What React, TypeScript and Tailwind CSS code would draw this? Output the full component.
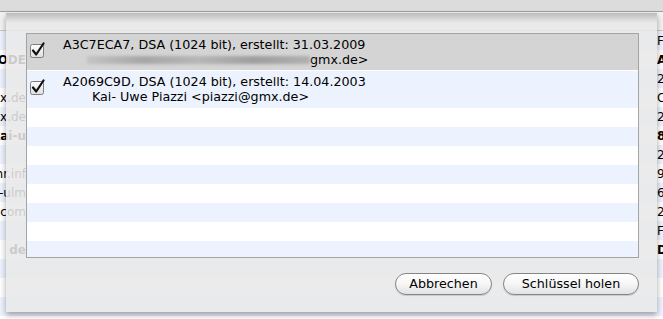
import React from 'react';

const font = { fontFamily: '"DejaVu Sans", "Liberation Sans", sans-serif' };

// rows of the parent window that peek out round the sheet
const bgRows: { left: string; right: string; bold?: boolean }[] = [
  { left: '', right: 'F' },
  { left: 'CODE', right: 'A', bold: true },
  { left: '', right: '2' },
  { left: 'gmx.de', right: 'C' },
  { left: 'gmx.de', right: '2' },
  { left: 'kai-u', right: '8', bold: true },
  { left: '', right: '2' },
  { left: 'hr.inf', right: '9' },
  { left: 'uni-ulm', right: '6' },
  { left: 'x.com', right: '2' },
  { left: '', right: 'F' },
  { left: 'de', right: 'D', bold: true },
  { left: '', right: '' },
  { left: '', right: '' },
  { left: '', right: '' },
];

const Checkbox: React.FC = () => (
  <svg width="17" height="17" viewBox="0 0 17 17">
    <defs>
      <linearGradient id="cb" x1="0" y1="0" x2="0" y2="1">
        <stop offset="0" stopColor="#ffffff" />
        <stop offset="1" stopColor="#dedede" />
      </linearGradient>
    </defs>
    <rect x="0.5" y="2.5" width="13" height="13" rx="2" fill="url(#cb)" stroke="#7c7c7c" />
    <path d="M3 8.5 L6.2 12.5 L13.5 1.5" fill="none" stroke="#111" strokeWidth="2.2" strokeLinecap="round" strokeLinejoin="round" />
  </svg>
);

const Row: React.FC<{ bg: string; children: React.ReactNode }> = ({ bg, children }) => (
  <div className={`flex h-[37px] shrink-0 ${bg}`}>
    <div className="w-[36px] shrink-0 pl-[3px] pt-[8px]">
      <Checkbox />
    </div>
    <div className="pt-[3px] text-[12.7px] leading-[15px] text-black whitespace-nowrap">{children}</div>
  </div>
);

export default function App() {
  return (
    <div className="relative w-[663px] h-[319px] overflow-hidden bg-white" style={font}>
      {/* parent window */}
      <div className="h-[12px] bg-[#dcdcdc] border-b border-[#a0a0a0]" />
      <div className="h-[19px] bg-[#f2f2f2] border-b border-[#c8c8c8]" />
      <div className="flex flex-col">
        {bgRows.map((r, i) => (
          <div
            key={i}
            className={`flex h-[19px] items-center justify-between text-[12px] text-black ${i % 2 === 0 ? 'bg-[#edf3fe]' : 'bg-white'}`}
          >
            <div className={`flex w-[26px] justify-end overflow-hidden whitespace-nowrap ${r.bold ? 'font-bold' : ''}`}>{r.left}</div>
            <div className={`w-[6px] overflow-hidden whitespace-nowrap ${r.bold ? 'font-bold' : ''}`}>{r.right}</div>
          </div>
        ))}
      </div>

      {/* sheet */}
      <div className="absolute left-[6px] top-[13px] w-[651px] h-[299px] bg-[#e8e8e8]/[0.87] shadow-[0_3px_6px_rgba(0,0,0,0.35)] flex flex-col">
        <div className="absolute inset-x-0 top-0 h-[10px] bg-gradient-to-b from-black/20 to-transparent pointer-events-none" />
        <div className="pt-[20px] pl-[20px] pr-[18px]">
          <div className="h-[225px] bg-white border border-[#a4a4a4] overflow-hidden flex flex-col">
            <Row bg="bg-[#d4d4d4] border-b border-white">
              <div>A3C7ECA7, DSA (1024 bit), erstellt: 31.03.2009</div>
              <div className="flex items-center pl-[24px]">
                <div className="h-[8px] w-[223px] blur-[1.5px] bg-[linear-gradient(90deg,#c4c4c4,#a6a6a6_25%,#b6b6b6_50%,#9e9e9e_75%,#b0b0b0)]" />
                <span>gmx.de&gt;</span>
              </div>
            </Row>
            <Row bg="bg-[#edf3fe]">
              <div>A2069C9D, DSA (1024 bit), erstellt: 14.04.2003</div>
              <div className="pl-[29px]">Kai- Uwe Piazzi &lt;piazzi@gmx.de&gt;</div>
            </Row>
            {[0, 1, 2, 3, 4, 5, 6, 7].map((i) => (
              <div key={i} className={`h-[19px] shrink-0 ${i % 2 === 0 ? 'bg-white' : 'bg-[#edf3fe]'}`} />
            ))}
          </div>
        </div>
        <div className="flex justify-end gap-[11px] pt-[15px] pr-[18px]">
          <button className="h-[22px] w-[97px] rounded-full border border-[#858585] bg-gradient-to-b from-white via-[#f6f6f6] to-[#e2e2e2] text-[12.7px] text-black shadow-[0_1px_1px_rgba(0,0,0,0.15)]">
            Abbrechen
          </button>
          <button className="h-[22px] w-[136px] rounded-full border border-[#858585] bg-gradient-to-b from-white via-[#f6f6f6] to-[#e2e2e2] text-[12.7px] text-black shadow-[0_1px_1px_rgba(0,0,0,0.15)]">
            Schlüssel holen
          </button>
        </div>
      </div>
    </div>
  );
}
